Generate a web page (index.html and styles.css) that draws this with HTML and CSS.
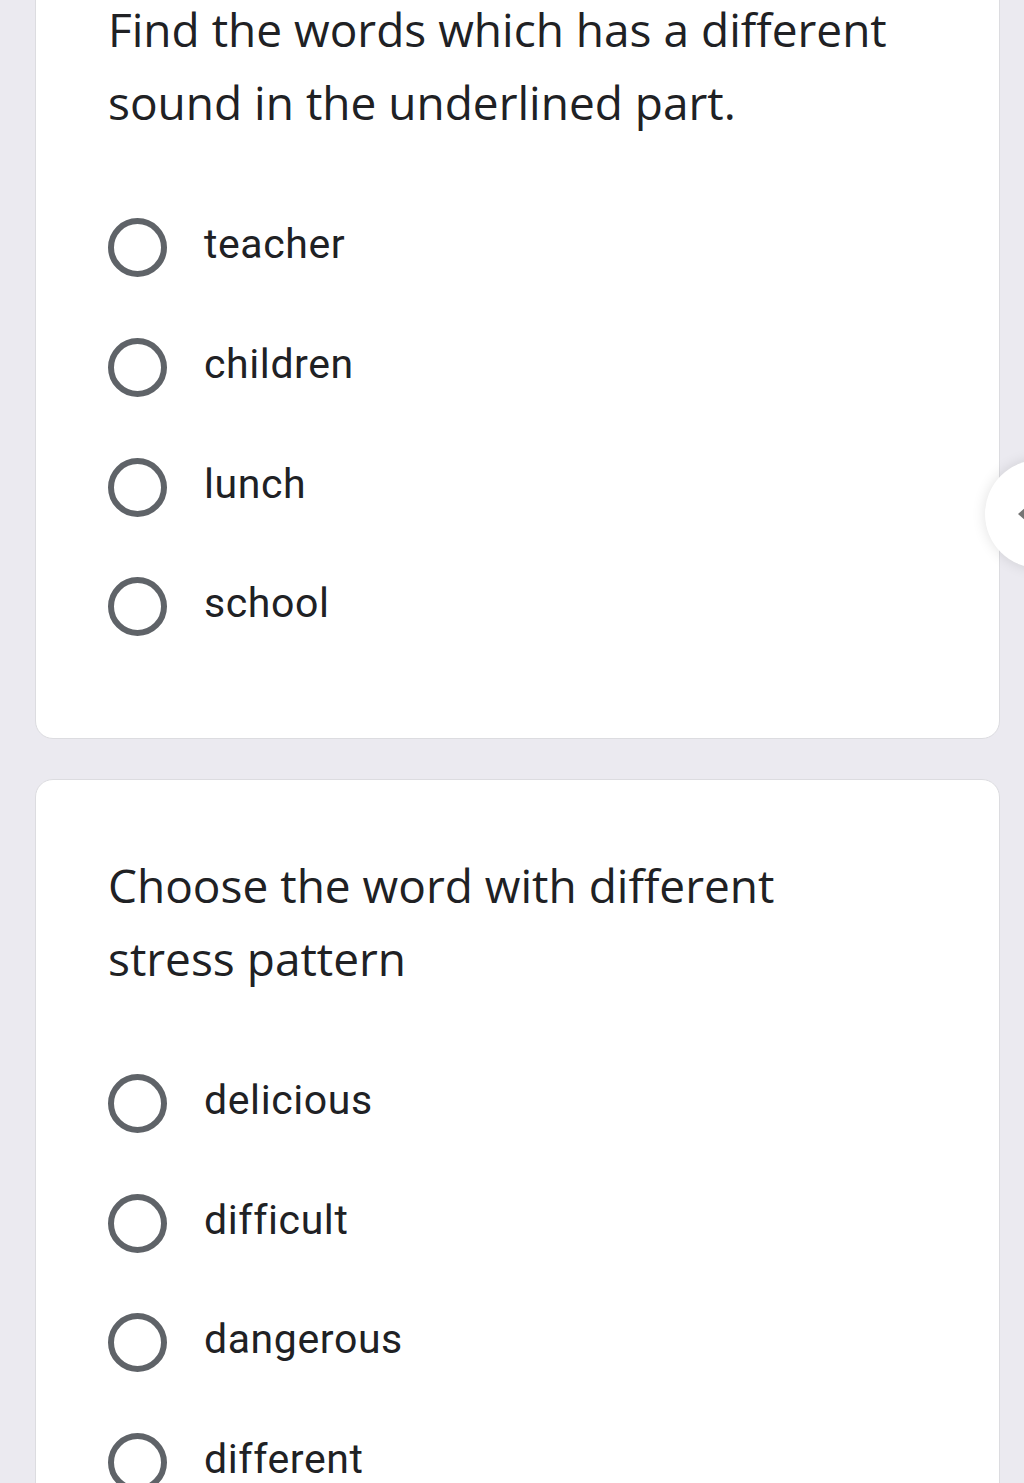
FILE: index.html
```html
<!DOCTYPE html>
<html lang="en">
<head>
<meta charset="utf-8">
<title>Form</title>
<link rel="stylesheet" href="styles.css">
</head>
<body>
<main class="form">
  <section class="card">
    <h2 class="title">Find the words which has a different sound in the underlined part.</h2>
    <div class="options">
      <label class="option"><span class="radio"></span><span class="label">teacher</span></label>
      <label class="option"><span class="radio"></span><span class="label">children</span></label>
      <label class="option"><span class="radio"></span><span class="label">lunch</span></label>
      <label class="option"><span class="radio"></span><span class="label">school</span></label>
    </div>
  </section>
  <section class="card">
    <h2 class="title">Choose the word with different stress pattern</h2>
    <div class="options">
      <label class="option"><span class="radio"></span><span class="label">delicious</span></label>
      <label class="option"><span class="radio"></span><span class="label">difficult</span></label>
      <label class="option"><span class="radio"></span><span class="label">dangerous</span></label>
      <label class="option"><span class="radio"></span><span class="label">different</span></label>
    </div>
  </section>
</main>
<div class="fab">
  <svg class="fab-icon" width="24" height="24" viewBox="0 0 24 24"><path d="M15 5 L7 12 L15 19 Z" fill="#757575"/></svg>
</div>
</body>
</html>
```
FILE: styles.css
```css
html, body {
  margin: 0;
  padding: 0;
}
body {
  background: #ebeaf0;
  overflow: hidden;
  height: 1483px;
}
.form {
  display: flex;
  flex-direction: column;
  gap: 40px;
  width: 965px;
  margin: -77px 0 0 35px;
}
.card {
  background: #fff;
  border: 1px solid #dcdce0;
  border-radius: 18px;
  padding: 69px 24px 71px 72px;
}
.title {
  margin: 0;
  font-family: "Open Sans", sans-serif;
  font-weight: 400;
  font-size: 46px;
  line-height: 73px;
  color: #202124;
  width: 800px;
}
.options {
  margin-top: 49px;
  display: flex;
  flex-direction: column;
}
.option {
  display: flex;
  align-items: center;
  gap: 37px;
  height: 119.7px;
}
.radio {
  width: 59px;
  height: 59px;
  box-sizing: border-box;
  border: 6px solid #5f6368;
  border-radius: 50%;
  flex: none;
}
.label {
  font-family: Roboto, sans-serif;
  font-size: 41px;
  letter-spacing: 0.6px;
  color: #202124;
  padding-bottom: 7px;
}
.fab {
  position: absolute;
  left: 985px;
  top: 460px;
  width: 108px;
  height: 108px;
  border-radius: 50%;
  background: #fff;
  box-shadow: 0 0 14px rgba(0,0,0,0.12);
}
.fab-icon {
  position: absolute;
  left: 26px;
  top: 42px;
}
```
